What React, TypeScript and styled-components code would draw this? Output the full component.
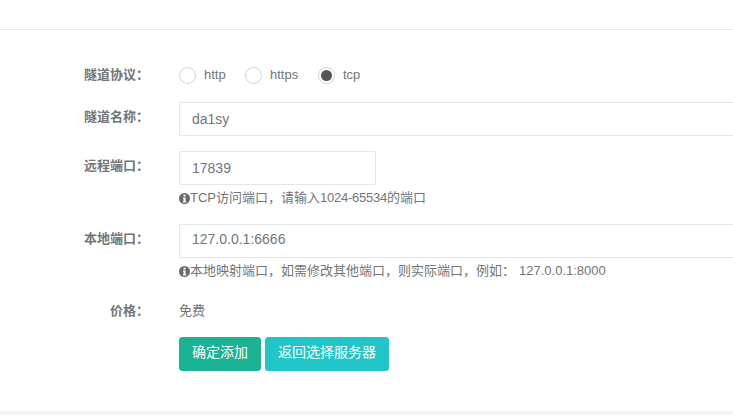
import React from "react";
import styled, { createGlobalStyle } from "styled-components";

const Global = createGlobalStyle`
  html, body { margin: 0; padding: 0; background: #fff; overflow: hidden; }
  body {
    font-family: "Liberation Sans", "Noto Sans CJK SC", sans-serif;
    font-size: 13px;
    color: #737577;
  }
`;

const Page = styled.div`
  width: 733px;
  height: 415px;
  display: flex;
  flex-direction: column;
  overflow: hidden;
  background: #f3f3f4;
`;

const Card = styled.div`
  flex: none;
  height: 411px;
  box-sizing: border-box;
  background: #fff;
`;

const TopBar = styled.div`
  height: 29px;
  border-bottom: 1px solid #e7eaec;
`;

const Form = styled.form`
  display: flex;
  flex-direction: column;
  padding-top: 30px;
  margin: 0;
`;

const Row = styled.div<{ $gap: number }>`
  display: grid;
  grid-template-columns: 149px 1fr;
  column-gap: 30px;
  margin-bottom: ${(p) => p.$gap}px;
`;

const Label = styled.label<{ $top: number }>`
  font-weight: 700;
  text-align: right;
  line-height: 18px;
  padding-top: ${(p) => p.$top}px;
`;

const Controls = styled.div`
  min-width: 0;
`;

const Radios = styled.div`
  display: flex;
  align-items: center;
  height: 30px;
`;

const RadioItem = styled.span<{ $width: number }>`
  display: flex;
  align-items: center;
  width: ${(p) => p.$width}px;
  line-height: 18px;
`;

const RadioDot = styled.span<{ $checked?: boolean }>`
  flex: none;
  width: 17px;
  height: 17px;
  box-sizing: border-box;
  border-radius: 50%;
  border: 1px solid #d0d2d4;
  background: #fff;
  margin-right: 8px;
  display: flex;
  align-items: center;
  justify-content: center;
  &::after {
    content: "";
    display: ${(p) => (p.$checked ? "block" : "none")};
    width: 11px;
    height: 11px;
    border-radius: 50%;
    background: #555;
  }
`;

const Input = styled.input<{ $short?: boolean; $raised?: boolean }>`
  display: block;
  box-sizing: border-box;
  width: ${(p) => (p.$short ? "197px" : "700px")};
  height: 34px;
  padding: ${(p) => (p.$raised ? "2px 12px 6px" : "6px 12px")};
  border: 1px solid #e5e6e7;
  border-radius: 1px;
  background: #fff;
  color: #737577;
  font: 14px/20px "Liberation Sans", "Noto Sans CJK SC", sans-serif;
  outline: none;
`;

const Help = styled.div`
  display: flex;
  align-items: center;
  margin-top: 4px;
  height: 18px;
  line-height: 18px;
  white-space: nowrap;
`;

const InfoIcon = styled.svg`
  flex: none;
  width: 11px;
  height: 11px;
`;

const Digits = styled.span`
  letter-spacing: -0.25px;
`;

const Example = styled.span`
  margin-left: 4px;
`;

const Static = styled.div`
  line-height: 18px;
`;

const Buttons = styled.div`
  display: flex;
  gap: 4px;
`;

const Button = styled.button<{ $info?: boolean }>`
  height: 34px;
  padding: 0 12px 4px;
  border: 1px solid ${(p) => (p.$info ? "#23c6c8" : "#1ab394")};
  border-radius: 3px;
  background: ${(p) => (p.$info ? "#23c6c8" : "#1ab394")};
  color: #fff;
  font: 14px/20px "Liberation Sans", "Noto Sans CJK SC", sans-serif;
`;

const Info = () => (
  <InfoIcon viewBox="0 0 16 16" aria-hidden="true">
    <circle cx="8" cy="8" r="8" fill="#676a6c" />
    <rect x="6.6" y="2.4" width="2.9" height="2.7" fill="#fff" />
    <path d="M5.6 6.400h3.900v5.600h1v1.700H5.600V12h1V8.100H5.600z" fill="#fff" />
  </InfoIcon>
);

export default function App() {
  return (
    <Page>
      <Global />
      <Card>
        <TopBar />
        <Form>
          <Row $gap={12}>
            <Label $top={6}>隧道协议&#xFF1A;</Label>
            <Controls>
              <Radios>
                <RadioItem $width={66}><RadioDot />http</RadioItem>
                <RadioItem $width={73}><RadioDot />https</RadioItem>
                <RadioItem $width={60}><RadioDot $checked />tcp</RadioItem>
              </Radios>
            </Controls>
          </Row>
          <Row $gap={15}>
            <Label $top={6}>隧道名称&#xFF1A;</Label>
            <Controls><Input defaultValue="da1sy" /></Controls>
          </Row>
          <Row $gap={17}>
            <Label $top={6}>远程端口&#xFF1A;</Label>
            <Controls>
              <Input $short defaultValue="17839" />
              <Help><Info />TCP访问端口&#xFF0C;请输入<Digits>1024-65534</Digits>的端口</Help>
            </Controls>
          </Row>
          <Row $gap={22}>
            <Label $top={6}>本地端口&#xFF1A;</Label>
            <Controls>
              <Input $raised defaultValue="127.0.0.1:6666" />
              <Help><Info />本地映射端口&#xFF0C;如需修改其他端口&#xFF0C;则实际端口&#xFF0C;例如&#xFF1A;<Example>127.0.0.1:8000</Example></Help>
            </Controls>
          </Row>
          <Row $gap={17}>
            <Label $top={0}>价格&#xFF1A;</Label>
            <Controls><Static>免费</Static></Controls>
          </Row>
          <Row $gap={0}>
            <span />
            <Buttons>
              <Button type="button">确定添加</Button>
              <Button type="button" $info>返回选择服务器</Button>
            </Buttons>
          </Row>
        </Form>
      </Card>
    </Page>
  );
}
